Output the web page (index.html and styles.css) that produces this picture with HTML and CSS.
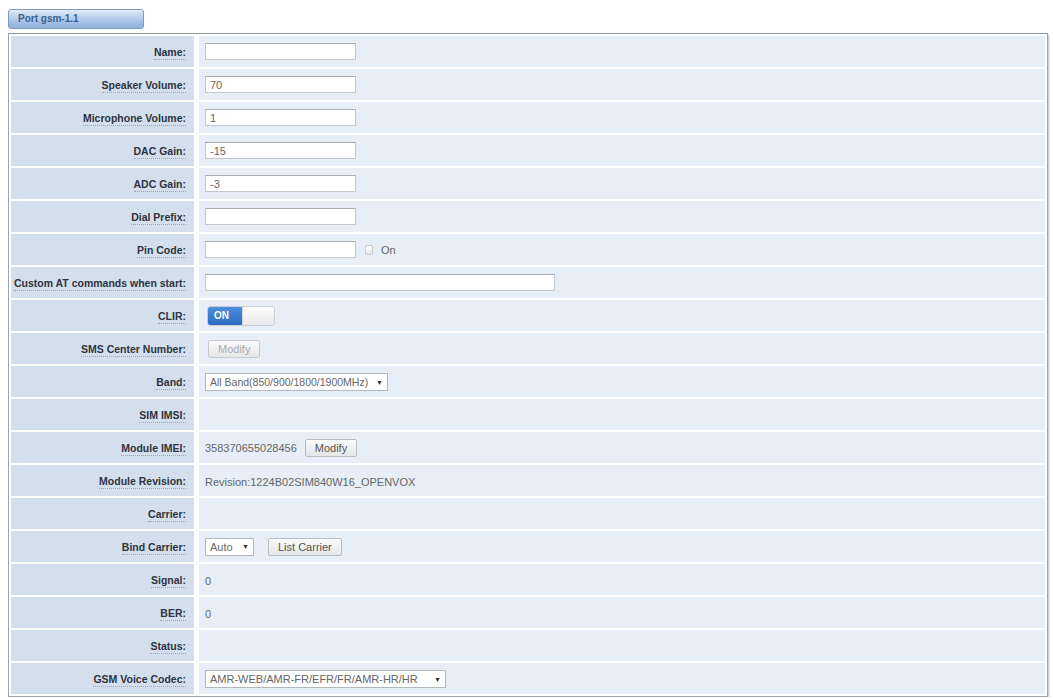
FILE: index.html
```html
<!DOCTYPE html>
<html lang="en">
<head>
    <meta charset="UTF-8">
    <title>Port gsm-1.1</title>
    <link rel="stylesheet" href="styles.css">
</head>
<body>
    <div class="tab">Port gsm-1.1</div>

    <table class="settings">
        <tr>
            <th><span class="help">Name:</span></th>
            <td><input type="text" class="field"></td>
        </tr>
        <tr>
            <th><span class="help">Speaker Volume:</span></th>
            <td><input type="text" class="field" value="70"></td>
        </tr>
        <tr>
            <th><span class="help">Microphone Volume:</span></th>
            <td><input type="text" class="field" value="1"></td>
        </tr>
        <tr>
            <th><span class="help">DAC Gain:</span></th>
            <td><input type="text" class="field" value="-15"></td>
        </tr>
        <tr>
            <th><span class="help">ADC Gain:</span></th>
            <td><input type="text" class="field" value="-3"></td>
        </tr>
        <tr>
            <th><span class="help">Dial Prefix:</span></th>
            <td><input type="text" class="field"></td>
        </tr>
        <tr>
            <th><span class="help">Pin Code:</span></th>
            <td>
                <div class="inline">
                    <input type="text" class="field">
                    <span class="check"></span>
                    <span class="value">On</span>
                </div>
            </td>
        </tr>
        <tr>
            <th><span class="help">Custom AT commands when start:</span></th>
            <td><input type="text" class="field field-wide"></td>
        </tr>
        <tr>
            <th><span class="help">CLIR:</span></th>
            <td>
                <div class="switch">
                    <span class="switch-on">ON</span>
                    <span class="switch-off"></span>
                </div>
            </td>
        </tr>
        <tr>
            <th><span class="help">SMS Center Number:</span></th>
            <td><button type="button" class="btn btn-disabled">Modify</button></td>
        </tr>
        <tr>
            <th><span class="help">Band:</span></th>
            <td><div class="select select-band">All Band(850/900/1800/1900MHz)<span class="arrow">&#9660;</span></div></td>
        </tr>
        <tr>
            <th><span class="help">SIM IMSI:</span></th>
            <td></td>
        </tr>
        <tr>
            <th><span class="help">Module IMEI:</span></th>
            <td>
                <div class="inline">
                    <span class="value">358370655028456</span>
                    <button type="button" class="btn">Modify</button>
                </div>
            </td>
        </tr>
        <tr>
            <th><span class="help">Module Revision:</span></th>
            <td><span class="value">Revision:1224B02SIM840W16_OPENVOX</span></td>
        </tr>
        <tr>
            <th><span class="help">Carrier:</span></th>
            <td></td>
        </tr>
        <tr>
            <th><span class="help">Bind Carrier:</span></th>
            <td>
                <div class="inline">
                    <div class="select select-auto">Auto<span class="arrow">&#9660;</span></div>
                    <button type="button" class="btn btn-list">List Carrier</button>
                </div>
            </td>
        </tr>
        <tr>
            <th><span class="help">Signal:</span></th>
            <td><span class="value">0</span></td>
        </tr>
        <tr>
            <th><span class="help">BER:</span></th>
            <td><span class="value">0</span></td>
        </tr>
        <tr>
            <th><span class="help">Status:</span></th>
            <td></td>
        </tr>
        <tr>
            <th><span class="help">GSM Voice Codec:</span></th>
            <td><div class="select select-codec">AMR-WEB/AMR-FR/EFR/FR/AMR-HR/HR<span class="arrow">&#9660;</span></div></td>
        </tr>
    </table>
</body>
</html>
```

FILE: styles.css
```css
* {
    box-sizing: border-box;
}

body {
    margin: 9px 0 0 8px;
    background: #fff;
    font-family: "Liberation Sans", Arial, sans-serif;
    color: #555;
}

/* page tab above the table */
.tab {
    width: 136px;
    height: 20px;
    padding: 3px 0 0 9px;
    border: 1px solid #7f9cc0;
    border-radius: 3px;
    background: linear-gradient(#dfeaf7, #a9c4e6 60%, #8fb0dc);
    color: #3d5f8e;
    font-size: 10px;
    font-weight: bold;
    margin-bottom: 4px;
}

.settings {
    width: 1040px;
    border: 1px solid #9ca6ae;
    border-top-color: #8f9aa3;
    border-spacing: 2px;
    box-shadow: 1px 1px 2px rgba(0, 0, 0, 0.25);
    background: #fff;
}

.settings th,
.settings td {
    height: 31px;
    padding: 0;
    vertical-align: middle;
}

.settings th {
    width: 186px;
    background: #d3dfec;
    text-align: right;
    padding-right: 8px;
    font-size: 10.5px;
    font-weight: bold;
    color: #2e3440;
    white-space: nowrap;
    border-right: 3px solid #fff;
}

.settings td {
    background: #e7eef7;
    padding-left: 6px;
}

.help {
    border-bottom: 1px dotted #9aa3ad;
    padding-bottom: 1px;
}

.value {
    font-size: 11px;
    color: #666;
}

.inline {
    display: flex;
    align-items: center;
}

.field {
    display: block;
    width: 151px;
    height: 17px;
    border: 1px solid #c4c8cc;
    border-top-color: #a9adb2;
    padding: 0 4px;
    background: #fff;
    font-family: inherit;
    font-size: 11px;
    color: #666;
}

.field-wide {
    width: 350px;
}

.check {
    width: 8px;
    height: 10px;
    margin: 0 8px 0 9px;
    border: 1px solid #c6cacd;
    border-radius: 2px;
    background: linear-gradient(#fff, #e3e6e9);
}

/* on/off slider */
.switch {
    display: flex;
    width: 68px;
    height: 20px;
    margin-left: 2px;
    border: 1px solid #c9ced4;
    border-radius: 3px;
    overflow: hidden;
}

.switch-on {
    width: 34px;
    padding: 3px 0 0 6px;
    background: linear-gradient(#4d8fdc, #2c6cc2);
    color: #fff;
    font-size: 10px;
    font-weight: bold;
}

.switch-off {
    flex: 1;
    background: linear-gradient(#fdfdfd, #e6e8ea);
    border-left: 1px solid #d5d8db;
}

.btn {
    height: 18px;
    padding: 0 9px;
    border: 1px solid #b9bdc1;
    border-radius: 2px;
    background: linear-gradient(#fbfbfb, #e4e6e8);
    font-family: inherit;
    font-size: 11px;
    color: #555;
}

.btn-disabled {
    margin-left: 3px;
    color: #a8abae;
    border-color: #c7cacd;
}

.inline .btn {
    margin-left: 8px;
}

.inline .btn-list {
    margin-left: 14px;
}

.select {
    display: inline-flex;
    align-items: center;
    height: 18px;
    padding: 0 4px;
    border: 1px solid #b3b8bd;
    background: #fff;
    font-size: 11px;
    color: #666;
    white-space: nowrap;
}

.select-band {
    width: 183px;
    font-size: 10.5px;
}

.select-auto {
    width: 49px;
}

.select-codec {
    width: 241px;
}

.arrow {
    flex-shrink: 0;
    margin-left: auto;
    padding-left: 5px;
    font-size: 7px;
    color: #333;
}
```
